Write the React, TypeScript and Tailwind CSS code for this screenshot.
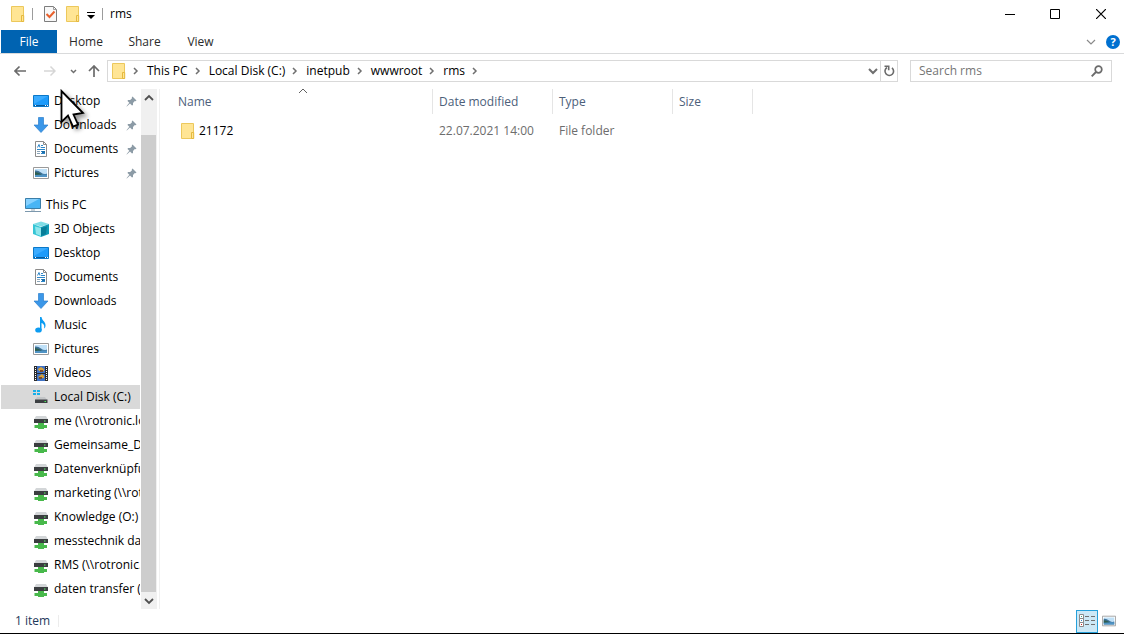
import React from "react";

type IconName = "desktop" | "download" | "document" | "picture" | "pc" | "cube" | "music" | "video" | "disk" | "net";

function Folder({ className }: { className?: string }) {
  return (
    <svg width="14" height="16" viewBox="0 0 14 16" className={className} aria-hidden="true">
      <path d="M.5 .5H12.5V15.5H.5Z" fill="#ffe594" stroke="#ecc85c" />
      <path d="M10.500 15.5V9.5H12.700V15.5Z" fill="#ffe594" stroke="#e5b93e" />
    </svg>
  );
}

function PictureGlyph() {
  return (
    <>
      <path d="M.5 2.5H15.5V13.5H.5Z" fill="#fff" stroke="#9a9a9a" />
      <path d="M2 4H14V9H2Z" fill="#bfe0f7" />
      <path d="M2 5.500Q5 5 8 7.500T14 8.500V12H2Z" fill="#3d7199" />
      <path d="M2 9.500Q8 9.500 14 9.500V12H2Z" fill="#4f93c4" />
      <path d="M2 7Q5 7 9 9.500L2 10Z" fill="#2d5e50" />
    </>
  );
}

function Icon({ name }: { name: IconName }) {
  return (
    <svg width="16" height="16" viewBox="0 0 16 16" className="shrink-0" aria-hidden="true">
      {name === "desktop" && (
        <>
          <path d="M.5 2.500H15.500V13.500H.5Z" fill="#1e9bfa" stroke="#0b78c8" />
          <path d="M1 3H15L1 11Z" fill="#3aabff" />
          <path d="M1 12.500H15" stroke="#095a9a" />
          <path d="M2 12.500H3M12 12.500H13M14 12.500H15" stroke="#fff" />
        </>
      )}
      {name === "download" && <path d="M5.500 .5H10.500V8H15L8 15.500L1 8H5.500Z" fill="#3b97e8" stroke="#2b7fcd" strokeWidth=".7" />}
      {name === "document" && (
        <>
          <path d="M2.500 .5H10.500L13.500 3.500V15.500H2.500Z" fill="#fff" stroke="#8b8b8b" />
          <path d="M10.500 .5V3.500H13.500" fill="none" stroke="#8b8b8b" />
          <path d="M4.500 6.500L6 3.500L7 6.500M8 4.500H10M8 6.500H12M4 8.500H12M8 10.500H12M8 12.500H12" fill="none" stroke="#2c86c9" />
          <path d="M4 10.500H7M4 12.500H7" stroke="#8aa4b8" />
          <path d="M9 10H12V12H9Z" fill="#1c6ea8" />
        </>
      )}
      {name === "picture" && <PictureGlyph />}
      {name === "pc" && (
        <>
          <path d="M.5 1.500H15.500V11.500H.5Z" fill="#49b5f5" stroke="#3b7ea8" />
          <path d="M1 2H14L1 9Z" fill="#86d1ff" />
          <path d="M6 12H10V14H6Z" fill="#c9d3da" />
          <path d="M0 14.500H16" stroke="#7c98ad" />
        </>
      )}
      {name === "cube" && (
        <>
          <path d="M0 3L8 .5L16 3L8 5.500Z" fill="#7fdde6" />
          <path d="M0 3L8 6V16L0 13Z" fill="#35c5d5" />
          <path d="M16 3L8 6V16L16 13Z" fill="#109bb5" />
          <path d="M2 5.500L8 7V15L3 13Z" fill="#8ee6ec" />
          <path d="M14 5.500L8 7V15L13 13Z" fill="#087e99" />
        </>
      )}
      {name === "music" && (
        <>
          <path d="M7 0H8.500C9 4 13 4.500 12.500 9C12.300 10 12 11 11 11.500C12 8 10 6.500 8.500 6V13H7Z" fill="#0c9cf2" />
          <ellipse cx="5.500" cy="13" rx="3.300" ry="2.600" fill="#0c9cf2" />
        </>
      )}
      {name === "video" && (
        <>
          <path d="M1 1H15V16H1Z" fill="#2c2c2c" />
          <path d="M4 1H12V16H4Z" fill="#3f72c4" />
          <path d="M5 4L8 2L11 4V6H6ZM5 12L9 9L11 11V13H6Z" fill="#d8a23a" />
          <path d="M7 5H10V7H7ZM6 12H9V14H6Z" fill="#7a4a2c" />
          <path d="M2.500 2V16M13.500 2V16" stroke="#fff" strokeDasharray="1 1" />
          <path d="M4 8.500H12" stroke="#2c2c2c" />
        </>
      )}
      {name === "disk" && (
        <>
          <path d="M0 1H3V3H0ZM4 1H7V3H4ZM0 4H3V6H0ZM4 4H7V6H4Z" fill="#18afe9" />
          <path d="M4 8H12L14 11H2Z" fill="#c3c5c7" />
          <path d="M2 10.500H14.500V14H2Z" fill="#3c3f42" />
          <path d="M11.500 12.500H13" stroke="#4bea58" />
        </>
      )}
      {name === "net" && (
        <>
          <path d="M3 3H13L15 6.500H1Z" fill="#d3d6d8" />
          <path d="M1 6H15V10H1Z" fill="#3b3e40" />
          <path d="M11 8H12.500" stroke="#5bf268" />
          <path d="M5 10H11V12H14V15H11V16H5V15H1.500V12H5Z" fill="#48b94b" />
        </>
      )}
    </svg>
  );
}

function Pin() {
  return (
    <svg width="11" height="11" viewBox="0 0 11 11" className="mr-[3px] shrink-0" aria-hidden="true">
      <path d="M6.500 .5L10.500 4.500L9.500 5.200L8.800 5L7 7L7 9L6 9.500L4 7.500L.8 10.500L.5 10.200L3.300 6.800L1.500 5L2 4L4.200 4L6 2.200L5.800 1.200Z" fill="#8c9ba6" />
    </svg>
  );
}

function Chevron({ dir, className, color = "#6f6f6f", width = 2 }: { dir: "right" | "down" | "up"; className?: string; color?: string; width?: number }) {
  const d = dir === "right" ? "M3 2L6 5L3 8" : dir === "down" ? "M1 3L5 7L9 3" : "M1 7L5 3L9 7";
  return (
    <svg width="10" height="10" viewBox="0 0 10 10" className={className} aria-hidden="true">
      <path d={d} fill="none" stroke={color} strokeWidth={width} />
    </svg>
  );
}

const quick: [string, IconName][] = [
  ["Desktop", "desktop"],
  ["Downloads", "download"],
  ["Documents", "document"],
  ["Pictures", "picture"],
];

const places: [string, IconName][] = [
  ["3D Objects", "cube"],
  ["Desktop", "desktop"],
  ["Documents", "document"],
  ["Downloads", "download"],
  ["Music", "music"],
  ["Pictures", "picture"],
  ["Videos", "video"],
  ["Local Disk (C:)", "disk"],
  ["me (\\\\rotronic.lo", "net"],
  ["Gemeinsame_Da", "net"],
  ["Datenverknüpfu", "net"],
  ["marketing (\\\\rot", "net"],
  ["Knowledge (O:)", "net"],
  ["messtechnik dat", "net"],
  ["RMS (\\\\rotronic.", "net"],
  ["daten transfer (\\\\", "net"],
];

function Place({ label, icon, pinned, root }: { label: string; icon: IconName; pinned?: boolean; root?: boolean }) {
  const selected = icon === "disk";
  return (
    <li>
      <a
        href="#"
        aria-current={selected ? "page" : undefined}
        className={`flex h-6 items-center gap-1 overflow-hidden ${root ? "pl-6" : "pl-8"} ${selected ? "bg-[#d9d9d9]" : ""}`}
      >
        <Icon name={icon} />
        <span className="min-w-0 flex-1 overflow-hidden pl-px whitespace-nowrap">{label}</span>
        {pinned && <Pin />}
      </a>
    </li>
  );
}

const crumbs = ["This PC", "Local Disk (C:)", "inetpub", "wwwroot", "rms"];

export default function App() {
  return (
    <div className="relative flex min-h-screen flex-col border-b border-black bg-white font-['Open_Sans','Noto_Sans',sans-serif] text-xs text-black">
      <header>
        <div className="flex h-[30px] items-center pb-0.5 pl-[11px]">
          <Folder />
          <span className="ml-[7px] h-3 w-px bg-[#9c9c9c]" />
          <button aria-label="Properties" className="ml-[11px]">
            <svg width="13" height="16" viewBox="0 0 13 16">
              <path d="M.5 .5H9.500L12.500 3.500V15.500H.5Z" fill="#f8f8f8" stroke="#7d7d7d" />
              <path d="M9.500 .5V3.500H12.500" fill="none" stroke="#9d9d9d" />
              <path d="M2.500 8L5.500 11L10.500 5.500" fill="none" stroke="#e8602c" strokeWidth="2" />
            </svg>
          </button>
          <button aria-label="New folder" className="ml-[9px]"><Folder /></button>
          <button aria-label="Customize toolbar" className="mt-0.5 ml-[7px]">
            <svg width="8" height="8" viewBox="0 0 8 8"><path d="M0 1.500H8" stroke="#000" /><path d="M0 4H8L4 8Z" /></svg>
          </button>
          <span className="mx-[7px] h-3 w-px bg-[#9c9c9c]" />
          <h1>rms</h1>
          <div className="ml-auto flex h-full">
            <button aria-label="Minimize" className="flex w-[45px] items-center justify-center">
              <svg width="10" height="10" viewBox="0 0 10 10"><path d="M0 5.500H10" stroke="#000" /></svg>
            </button>
            <button aria-label="Maximize" className="flex w-[45px] items-center justify-center">
              <svg width="10" height="10" viewBox="0 0 10 10"><path d="M.5 .5H9.500V9.500H.5Z" fill="none" stroke="#000" /></svg>
            </button>
            <button aria-label="Close" className="flex w-[47px] items-center justify-center">
              <svg width="10" height="10" viewBox="0 0 10 10"><path d="M0 0L10 10M10 0L0 10" stroke="#000" strokeWidth="1.200" /></svg>
            </button>
          </div>
        </div>
        <div className="flex h-6 items-stretch border-b border-[#d9dadb] pl-px text-[#2b2b2b]">
          <button className="w-14 bg-[#0063b1] text-white">File</button>
          <button className="w-[58px]">Home</button>
          <button className="w-[59px]">Share</button>
          <button className="w-[53px]">View</button>
          <div className="ml-auto flex items-center gap-2.5 pr-1">
            <button aria-label="Expand ribbon"><Chevron dir="down" color="#8a8a8a" width={1.2} /></button>
            <button aria-label="Help" className="h-3.5 w-3.5 rounded-full bg-[#0070d0] text-[11px] leading-3.5 font-bold text-white">?</button>
          </div>
        </div>
        <div className="flex h-[35px] items-center pb-px">
          <div className="flex w-[107px] items-center pl-3.5">
            <button aria-label="Back">
              <svg width="12" height="12" viewBox="0 0 12 12"><path d="M12 6H1M5.500 1.500L1 6L5.500 10.500" fill="none" stroke="#6b6b6b" strokeWidth="1.700" /></svg>
            </button>
            <button aria-label="Forward" className="ml-[18px]">
              <svg width="12" height="12" viewBox="0 0 12 12"><path d="M0 6H11M6.500 1.500L11 6L6.500 10.500" fill="none" stroke="#d6d6d6" strokeWidth="1.500" /></svg>
            </button>
            <button aria-label="Recent locations" className="ml-3.5">
              <svg width="7" height="7" viewBox="0 0 7 7"><path d="M1 2L3.500 4.500L6 2" fill="none" stroke="#6f6f6f" strokeWidth="1.500" /></svg>
            </button>
            <button aria-label="Up" className="ml-[11px]">
              <svg width="12" height="12" viewBox="0 0 12 12"><path d="M6 12V1M1 6L6 1L11 6" fill="none" stroke="#6b6b6b" strokeWidth="1.700" /></svg>
            </button>
          </div>
          <div className="flex h-[22px] min-w-0 flex-1 items-center border border-[#d9d9d9] pl-1">
            <Folder />
            <Chevron dir="right" className="ml-[5px]" width={1.5} />
            <nav aria-label="Address" className="flex items-center">
              {crumbs.map((c) => (
                <React.Fragment key={c}>
                  <a href="#" className="ml-1.5 whitespace-nowrap">{c}</a>
                  <Chevron dir="right" className="ml-[5px]" width={1.5} />
                </React.Fragment>
              ))}
            </nav>
            <button aria-label="Previous locations" className="mr-0.5 ml-auto"><Chevron dir="down" /></button>
            <button aria-label="Refresh" className="flex h-full w-[17px] items-center justify-center border-l border-[#d9d9d9]">
              <svg width="12" height="12" viewBox="0 0 12 12">
                <path d="M9 2.800A4.300 4.300 0 1 1 4 2.500" fill="none" stroke="#6b6b6b" strokeWidth="1.600" />
                <path d="M1.500 1.200H5.700V5.200" fill="none" stroke="#6b6b6b" strokeWidth="1.600" />
              </svg>
            </button>
          </div>
          <label className="mr-3 ml-3 flex h-[22px] w-[202px] items-center border border-[#d9d9d9] pr-2 pl-2">
            <input type="search" aria-label="Search rms" placeholder="Search rms" className="min-w-0 flex-1 outline-none placeholder:text-[#767676]" />
            <svg width="12" height="12" viewBox="0 0 12 12" aria-hidden="true">
              <circle cx="7.500" cy="4.500" r="3.300" fill="none" stroke="#6b6b6b" strokeWidth="1.700" />
              <path d="M5 7L.7 11.300" stroke="#6b6b6b" strokeWidth="1.900" />
            </svg>
          </label>
        </div>
      </header>

      <div className="flex flex-1">
        <aside className="flex w-40 shrink-0 border-r border-[#f0f0f0] pl-px">
          <nav aria-label="Places" className="min-w-0 flex-1 pb-2">
            <ul>{quick.map(([l, i]) => <Place key={l} label={l} icon={i} pinned />)}</ul>
            <ul className="mt-2">
              <Place label="This PC" icon="pc" root />
              {places.map(([l, i]) => <Place key={l} label={l} icon={i} />)}
            </ul>
          </nav>
          <div className="mr-0.5 ml-px flex w-4 flex-col bg-[#f0f0f0]">
            <button aria-label="Scroll up" className="flex h-[46px] justify-center pt-1 pr-px"><Chevron dir="up" color="#505050" width={1.8} /></button>
            <div className="mr-px flex-1 bg-[#cdcdcd]" />
            <button aria-label="Scroll down" className="flex h-[17px] items-center justify-center pr-px"><Chevron dir="down" color="#505050" width={1.8} /></button>
          </div>
        </aside>

        <main className="min-w-0 flex-1">
          <table className="w-[593px] table-fixed border-separate border-spacing-0 text-left">
            <colgroup>
              <col className="w-[273px]" />
              <col className="w-[120px]" />
              <col className="w-[120px]" />
              <col className="w-20" />
            </colgroup>
            <thead className="text-[#4c607a]">
              <tr className="h-[25px]">
                <th className="relative border-r border-[#e5e5e5] pl-[18px] font-normal">
                  Name
                  <Chevron dir="up" className="absolute top-[-3px] left-[138px]" color="#606060" width={1} />
                </th>
                <th className="border-r border-[#e5e5e5] pl-1.5 font-normal">Date modified</th>
                <th className="border-r border-[#e5e5e5] pl-1.5 font-normal">Type</th>
                <th className="border-r border-[#e5e5e5] pl-1.5 font-normal">Size</th>
              </tr>
            </thead>
            <tbody className="text-[#6d6d6d]">
              <tr className="h-[34px]">
                <td className="pl-5 text-black">
                  <a href="#" className="flex items-center gap-1 pl-px"><Folder />21172</a>
                </td>
                <td className="pl-1.5">22.07.2021 14:00</td>
                <td className="pl-1.5">File folder</td>
                <td />
              </tr>
            </tbody>
          </table>
        </main>
      </div>

      <footer className="flex h-6 items-center pl-[15px] text-[#1e395b]">
        <span>1 item</span>
        <span className="ml-2 h-3 w-px bg-[#ececec]" />
        <div className="ml-auto flex items-center pr-2">
          <button aria-label="Details view" className="flex h-[23px] w-[22px] items-center justify-center border border-[#26a0da] bg-[#cce8f6]">
            <svg width="16" height="14" viewBox="0 0 16 14">
              <path d="M.5 .5H4.500V4.500H.5ZM.5 4.500H4.500V8.500H.5ZM.5 8.500H4.500V12.500H.5Z" fill="#fff" stroke="#8a8a8a" />
              <path d="M6 2.500H10M12 2.500H16M6 6.500H10M12 6.500H16M6 10.500H10M12 10.500H16" stroke="#707070" />
              <path d="M2 2H3V3H2Z" fill="#3a8" /><path d="M2 6H3V7H2Z" fill="#38c" /><path d="M2 10H3V11H2Z" fill="#c22" />
            </svg>
          </button>
          <button aria-label="Large icons view" className="ml-1">
            <svg width="14" height="14" viewBox="0 0 16 16"><PictureGlyph /></svg>
          </button>
        </div>
      </footer>

      <svg width="34" height="44" viewBox="0 0 34 44" className="pointer-events-none absolute top-[88px] left-[58px] drop-shadow-[3px_3px_2px_rgba(0,0,0,0.4)]" aria-hidden="true">
        <path d="M3.500 3V34L10 27.500L15 38.500L20 36.500L15.500 26.500L25 25Z" fill="#fff" stroke="#000" strokeWidth="1.800" />
      </svg>
    </div>
  );
}
